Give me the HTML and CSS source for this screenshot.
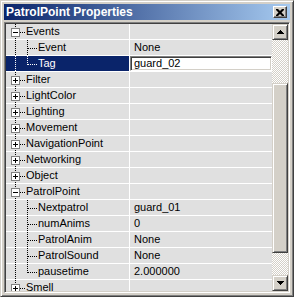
FILE: index.html
```html
<!DOCTYPE html>
<html lang="en">
<head>
    <meta charset="UTF-8">
    <title>PatrolPoint Properties</title>
    <link rel="stylesheet" href="styles.css">
</head>
<body>
    <div class="window">
        <div class="titlebar">
            <span class="title">PatrolPoint Properties</span>
            <span class="close">
                <svg width="8" height="7" viewBox="0 0 8 7"><path d="M0 0h2l2 2 2-2h2v1l-2.5 2.5L8 6v1H6L4 5 2 7H0V6l2.5-2.5L0 1z" fill="#000"/></svg>
            </span>
        </div>
        <div class="client">
            <div class="grid">
                <div class="row"><div class="name"><span class="gut grp open"><i class="box"></i></span>Events</div><div class="val"></div></div>
                <div class="row"><div class="name"><span class="gut"></span><span class="sub"></span>Event</div><div class="val">None</div></div>
                <div class="row sel"><div class="name"><span class="gut"></span><span class="sub last"></span>Tag</div><div class="val"><span class="edit">guard_02</span></div></div>
                <div class="row"><div class="name"><span class="gut grp"><i class="box"></i></span>Filter</div><div class="val"></div></div>
                <div class="row"><div class="name"><span class="gut grp"><i class="box"></i></span>LightColor</div><div class="val"></div></div>
                <div class="row"><div class="name"><span class="gut grp"><i class="box"></i></span>Lighting</div><div class="val"></div></div>
                <div class="row"><div class="name"><span class="gut grp"><i class="box"></i></span>Movement</div><div class="val"></div></div>
                <div class="row"><div class="name"><span class="gut grp"><i class="box"></i></span>NavigationPoint</div><div class="val"></div></div>
                <div class="row"><div class="name"><span class="gut grp"><i class="box"></i></span>Networking</div><div class="val"></div></div>
                <div class="row"><div class="name"><span class="gut grp"><i class="box"></i></span>Object</div><div class="val"></div></div>
                <div class="row"><div class="name"><span class="gut grp open"><i class="box"></i></span>PatrolPoint</div><div class="val"></div></div>
                <div class="row"><div class="name"><span class="gut"></span><span class="sub"></span>Nextpatrol</div><div class="val">guard_01</div></div>
                <div class="row"><div class="name"><span class="gut"></span><span class="sub"></span>numAnims</div><div class="val">0</div></div>
                <div class="row"><div class="name"><span class="gut"></span><span class="sub"></span>PatrolAnim</div><div class="val">None</div></div>
                <div class="row"><div class="name"><span class="gut"></span><span class="sub"></span>PatrolSound</div><div class="val">None</div></div>
                <div class="row"><div class="name"><span class="gut"></span><span class="sub last"></span>pausetime</div><div class="val">2.000000</div></div>
                <div class="row"><div class="name"><span class="gut grp"><i class="box"></i></span>Smell</div><div class="val"></div></div>
            </div>
            <div class="scroll">
                <div class="sbtn up"><i></i></div>
                <div class="track">
                    <div class="thumb"></div>
                </div>
                <div class="sbtn down"><i></i></div>
            </div>
        </div>
    </div>
</body>
</html>
```

FILE: styles.css
```css
:root {
    --face: #d4d0c8;
    --row: #e0e0e0;
    --sel: #0a246a;
}
body {
    margin: 0;
    font-family: "Liberation Sans", Arial, sans-serif;
    font-size: 11px;
}

.window {
    width: 294px;
    height: 297px;
    box-sizing: border-box;
    background: var(--face);
    border: 1px solid;
    border-color: var(--face) #404040 #404040 var(--face);
    box-shadow: inset 1px 1px #fff, inset -1px -1px #808080;
    padding: 3px;
    display: flex;
    flex-direction: column;
}

/* title */
.titlebar {
    height: 16px;
    flex: none;
    display: flex;
    align-items: center;
    background: linear-gradient(to right, #0a246a, #a6caf0);
    margin-bottom: 2px;
}
.title {
    flex: 1;
    color: #fff;
    font-weight: bold;
    font-size: 12px;
    padding-left: 2px;
    white-space: nowrap;
}
.close {
    width: 12px;
    height: 10px;
    margin-right: 3px;
    display: flex;
    align-items: center;
    justify-content: center;
    background: var(--face);
    border: 1px solid;
    border-color: #fff #404040 #404040 #fff;
    box-shadow: inset -1px -1px #808080;
}

/* client area */
.client {
    flex: 1;
    min-height: 0;
    display: flex;
    border: 1px solid;
    border-color: #808080 #fff #fff #808080;
    box-shadow: inset 1px 1px #404040, inset -1px -1px var(--face);
    padding: 1px;
}
.grid {
    flex: 1;
    overflow: hidden;
    background: var(--row);
}
.row {
    display: flex;
    height: 15px;
    line-height: 15px;
}
.row + .row {
    border-top: 1px solid #fff;
}
.name {
    width: 123px;
    flex: none;
    display: flex;
    white-space: nowrap;
    border-right: 1px solid #fff;
}
.val {
    flex: 1;
    padding-left: 4px;
}

/* tree lines */
.gut {
    width: 20px;
    flex: none;
    display: flex;
    align-items: flex-start;
    background: repeating-linear-gradient(#000 0 1px, transparent 1px 2px) 9px 0 / 1px 100% no-repeat;
}
.gut.grp::after {
    content: "";
    width: 6px;
    height: 1px;
    margin-top: 8px;
    background: repeating-linear-gradient(to right, #000 0 1px, transparent 1px 2px);
}
.box {
    width: 7px;
    height: 7px;
    margin: 4px 0 0 5px;
    border: 1px solid #808080;
    background: linear-gradient(#000, #000) center / 5px 1px no-repeat,
                linear-gradient(#000, #000) center / 1px 5px no-repeat,
                #fff;
}
.open .box {
    background: linear-gradient(#000, #000) center / 5px 1px no-repeat, #fff;
}
.sub {
    width: 12px;
    flex: none;
    background: repeating-linear-gradient(#000 0 1px, transparent 1px 2px) 1px 0 / 1px 100% no-repeat,
                repeating-linear-gradient(to right, #000 0 1px, transparent 1px 2px) 2px 8px / 10px 1px no-repeat;
}
.sub.last {
    background: repeating-linear-gradient(#000 0 1px, transparent 1px 2px) 1px 0 / 1px 9px no-repeat,
                repeating-linear-gradient(to right, #000 0 1px, transparent 1px 2px) 2px 8px / 10px 1px no-repeat;
}

/* selected row */
.sel .name {
    background: var(--sel);
    color: #fff;
}
.sel .gut {
    background-image: repeating-linear-gradient(#fff 0 1px, transparent 1px 2px);
}
.sel .sub.last {
    background: repeating-linear-gradient(#fff 0 1px, transparent 1px 2px) 1px 0 / 1px 9px no-repeat,
                repeating-linear-gradient(to right, #fff 0 1px, transparent 1px 2px) 2px 8px / 10px 1px no-repeat;
}
.sel .val {
    padding: 0;
    display: flex;
}
.edit {
    flex: 1;
    background: #fff;
    border: 1px solid;
    border-color: #808080 #fff #fff #808080;
    box-shadow: inset 1px 1px #404040, inset -1px -1px var(--face);
    padding-left: 3px;
    line-height: 13px;
}

/* scrollbar */
.scroll {
    width: 16px;
    flex: none;
    display: flex;
    flex-direction: column;
}
.sbtn, .thumb {
    box-sizing: border-box;
    background: var(--face);
    border: 1px solid;
    border-color: var(--face) #404040 #404040 var(--face);
    box-shadow: inset 1px 1px #fff, inset -1px -1px #808080;
}
.sbtn {
    height: 16px;
    flex: none;
    display: flex;
    align-items: center;
    justify-content: center;
}
/* 7x4 pixel arrow */
.sbtn i {
    width: 7px;
    height: 4px;
    --k: linear-gradient(#000, #000);
}
.up i {
    background: var(--k) 3px 0 / 1px 1px no-repeat,
                var(--k) 2px 1px / 3px 1px no-repeat,
                var(--k) 1px 2px / 5px 1px no-repeat,
                var(--k) 0 3px / 7px 1px no-repeat;
}
.down i {
    background: var(--k) 0 0 / 7px 1px no-repeat,
                var(--k) 1px 1px / 5px 1px no-repeat,
                var(--k) 2px 2px / 3px 1px no-repeat,
                var(--k) 3px 3px / 1px 1px no-repeat;
}
.track {
    flex: 1;
    padding-top: 43px;
    background: repeating-conic-gradient(var(--face) 0 25%, #fff 0 50%) 0 0 / 2px 2px;
}
.thumb {
    height: 170px;
}
```
